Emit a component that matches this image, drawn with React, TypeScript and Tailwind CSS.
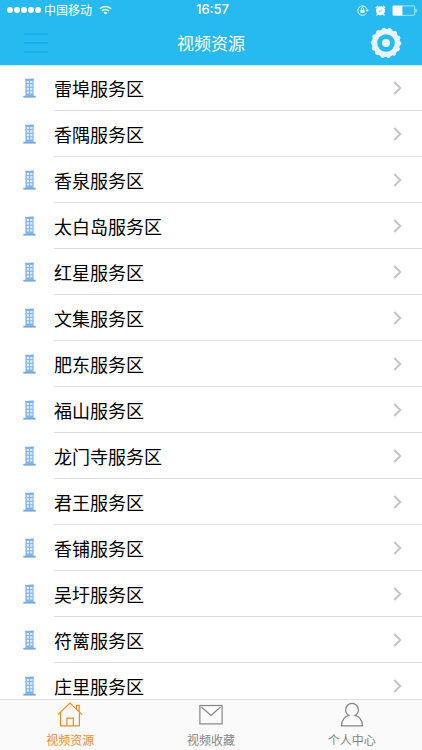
import React from "react";

const areas = [
  "雷埠服务区",
  "香隅服务区",
  "香泉服务区",
  "太白岛服务区",
  "红星服务区",
  "文集服务区",
  "肥东服务区",
  "福山服务区",
  "龙门寺服务区",
  "君王服务区",
  "香铺服务区",
  "吴圩服务区",
  "符篱服务区",
  "庄里服务区",
];

function WifiIcon() {
  return (
    <svg className="h-[10px] w-[13px]" viewBox="0 0 13 10" fill="none" stroke="#fff" strokeWidth="1.5" aria-hidden="true">
      <path d="M0.8 3.8a8 8 0 0 1 11.4 0" />
      <path d="M2.9 6a5.1 5.1 0 0 1 7.2 0" />
      <path d="M4.6 7.7a2.7 2.7 0 0 1 3.8 0L6.5 9.6z" fill="#fff" stroke="none" />
    </svg>
  );
}

function RotationLockIcon() {
  return (
    <svg className="h-[11px] w-[12px]" viewBox="0 0 12 11" fill="none" stroke="#fff" strokeWidth="0.9" aria-hidden="true">
      <path d="M9.3 8.4A4.7 4.7 0 1 1 10.2 5.2" />
      <path d="M8.8 4.9h2.9l-1.4 1.9z" fill="#fff" stroke="none" />
      <rect x="3.5" y="4.9" width="4" height="3" fill="#fff" stroke="none" />
      <path d="M4.3 5V3.9a1.2 1.2 0 0 1 2.4 0V5" />
    </svg>
  );
}

function AlarmIcon() {
  return (
    <svg className="h-[11px] w-[11px]" viewBox="0 0 11 11" fill="none" aria-hidden="true">
      <circle cx="5.5" cy="5.8" r="4.5" fill="#fff" />
      <path d="M1.2 2.6 2.6 1.2M9.8 2.6 8.4 1.2M2.4 9.4l-.5.6M8.6 9.4l.5.6" stroke="#fff" strokeWidth="1.3" strokeLinecap="round" />
      <path d="M5.5 6.2 7 4.4M5.5 6.2H3.8" stroke="#26baf0" strokeWidth="0.7" />
    </svg>
  );
}

function BatteryIcon() {
  return (
    <svg className="h-[11px] w-[26px]" viewBox="0 0 26 11" aria-hidden="true">
      <rect x="0.9" y="0.9" width="21.7" height="9.4" rx="0.8" fill="none" stroke="#fff" strokeWidth="0.6" />
      <rect x="0.8" y="0.8" width="9.6" height="9.6" fill="#fff" />
      <path d="M23.6 3.8c1.4.3 1.4 3.3 0 3.6z" fill="#fff" />
    </svg>
  );
}

function GearIcon() {
  return (
    <svg className="h-[32px] w-[32px]" viewBox="-16 -16 32 32" aria-hidden="true">
      <circle r="11.4" fill="none" stroke="#e9f4fa" strokeWidth="5.2" />
      <circle r="13.6" fill="none" stroke="#e9f4fa" strokeWidth="3.4" strokeLinecap="round" strokeDasharray="0.6 5.504" />
      <circle r="4" fill="#e9f4fa" />
    </svg>
  );
}

function BuildingIcon() {
  return (
    <svg className="h-[20px] w-[13px] shrink-0" viewBox="0 0 13 20" aria-hidden="true">
      <path d="M2.4 1.2 10.6 0.4V18.3H2.4z" fill="#86b4e8" />
      <path d="M2 1.3h9" stroke="#7fb0e6" strokeWidth="1" />
      <g fill="#e2effc">
        <rect x="3.8" y="3" width="2.2" height="2" />
        <rect x="7.2" y="3" width="2.2" height="2" />
        <rect x="3.8" y="6.2" width="2.2" height="2.4" />
        <rect x="7.2" y="6.2" width="2.2" height="2.4" />
        <rect x="3.8" y="9.8" width="2.2" height="2.4" />
        <rect x="7.2" y="9.8" width="2.2" height="2.4" />
        <rect x="3.8" y="13.4" width="2.2" height="2" />
        <rect x="7.2" y="13.4" width="2.2" height="2" />
      </g>
      <rect x="0.3" y="17.8" width="12.4" height="1.8" fill="#74a8df" />
    </svg>
  );
}

function ChevronIcon() {
  return (
    <svg className="h-[14px] w-[9px] shrink-0" viewBox="0 0 9 14" fill="none" stroke="#c3c3c7" strokeWidth="1.9" aria-hidden="true">
      <path d="M1.2 1 7.3 7l-6.1 6" />
    </svg>
  );
}

function HomeIcon() {
  return (
    <svg className="h-[26px] w-[26px]" viewBox="0 0 26 26" fill="none" stroke="currentColor" strokeWidth="1.2" aria-hidden="true">
      <path d="M0.9 12.6 13 1.1 25.1 12.6" />
      <path d="M3.6 10.4V23.9H22.4V10.4M19.4 7.2V3.4H22.2V9.8" />
      <path d="M9.9 23.9V16.2H16.3V23.9" />
    </svg>
  );
}

function MailIcon() {
  return (
    <svg className="h-[26px] w-[26px]" viewBox="0 0 26 26" fill="none" stroke="currentColor" strokeWidth="1.2" aria-hidden="true">
      <rect x="1.9" y="3.5" width="22.2" height="18.4" />
      <path d="M3.4 5 13 13.4 22.6 5" />
    </svg>
  );
}

function PersonIcon() {
  return (
    <svg className="h-[26px] w-[26px]" viewBox="0 0 26 26" fill="none" stroke="currentColor" strokeWidth="1.2" aria-hidden="true">
      <path d="M9.9 13.4C7.9 12.3 6.6 10.3 6.6 7.8A6.4 6.4 0 0 1 19.4 7.8C19.4 10.3 18.1 12.3 16.1 13.4 20.8 14.6 23.2 17.9 23.5 23.8H2.5C2.8 17.9 5.2 14.6 9.9 13.4z" />
    </svg>
  );
}

const tabs = [
  { label: "视频资源", Icon: HomeIcon, active: true },
  { label: "视频收藏", Icon: MailIcon, active: false },
  { label: "个人中心", Icon: PersonIcon, active: false },
];

export default function App() {
  return (
    <div className="flex h-screen flex-col bg-white font-['Noto_Sans_CJK_SC',sans-serif] text-black">
      <header className="z-10 shrink-0 bg-[#26baf0] text-white shadow-[0_1px_0_#c8f3fd]">
        <div className="grid h-5 grid-cols-3 items-center pr-1 pl-[7px] text-xs">
          <div className="flex items-center gap-[3px]">
            <div className="flex gap-px">
              {[1, 2, 3, 4, 5].map((n) => (
                <span key={n} className="size-[6px] rounded-full bg-white" />
              ))}
            </div>
            <span>中国移动</span>
            <span className="ml-1">
              <WifiIcon />
            </span>
          </div>
          <time className="text-center font-['Inter',sans-serif] text-[13px] font-medium">16:57</time>
          <div className="flex items-center justify-end gap-[6px]">
            <RotationLockIcon />
            <AlarmIcon />
            <BatteryIcon />
          </div>
        </div>
        <div className="grid h-[45px] grid-cols-3 items-center px-5">
          <button type="button" aria-label="菜单" className="flex w-[32px] flex-col items-center gap-[7px]">
            <span className="h-[2px] w-6 bg-[#17b0ec]" />
            <span className="h-[2px] w-6 bg-[#17b0ec]" />
            <span className="h-[2px] w-6 bg-[#17b0ec]" />
          </button>
          <h1 className="text-center text-[17px] leading-6 font-normal">视频资源</h1>
          <button type="button" aria-label="设置" className="justify-self-end">
            <GearIcon />
          </button>
        </div>
      </header>

      <main className="min-h-0 flex-1 overflow-y-auto [scrollbar-width:none]">
        <ul>
          {areas.map((name) => (
            <li key={name}>
              <button type="button" className="flex h-[46px] w-full items-center pl-[23px] text-left">
                <BuildingIcon />
                <span className="ml-[18px] flex h-full flex-1 items-center justify-between border-b border-[#dedee0] pr-5">
                  <span className="text-lg leading-6">{name}</span>
                  <ChevronIcon />
                </span>
              </button>
            </li>
          ))}
        </ul>
      </main>

      <nav className="grid shrink-0 grid-cols-3 border-t border-[#dcdcdc] bg-[#fafafa]">
        {tabs.map(({ label, Icon, active }) => (
          <button
            key={label}
            type="button"
            aria-current={active ? "page" : undefined}
            className={`flex h-[50px] flex-col items-center justify-between pt-[2px] text-xs ${active ? "text-[#f28a1e]" : "text-[#858585]"}`}
          >
            <Icon />
            <span className="leading-5">{label}</span>
          </button>
        ))}
      </nav>
    </div>
  );
}
